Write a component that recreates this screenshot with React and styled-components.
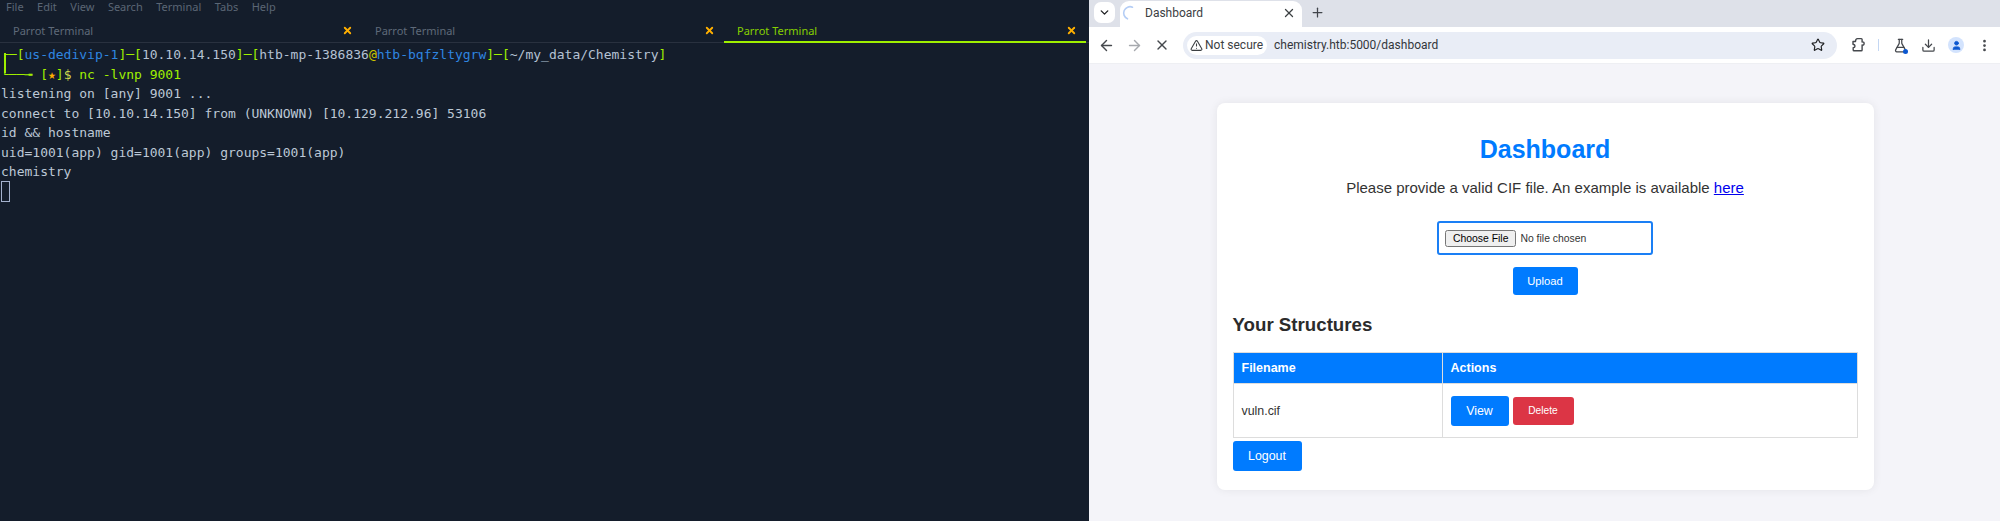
import React from 'react';
import styled, { createGlobalStyle } from 'styled-components';
import { ArrowLeft, ArrowRight, ChevronDown, Download, EllipsisVertical, FlaskConical, Plus, Star, TriangleAlert, User, X } from 'lucide-react';

const Global = createGlobalStyle`
  html, body { margin: 0; padding: 0; height: 521px; overflow: hidden; }
  * { box-sizing: border-box; }
`;

const Page = styled.div`
  display: flex;
  width: 2000px;
  height: 521px;
`;

/* Terminal */
const Terminal = styled.div`
  width: 1089px;
  flex: none;
  background: #141d2b;
  display: flex;
  flex-direction: column;
`;
const MenuBar = styled.div`
  height: 13px;
  display: flex;
  align-items: center;
  padding-left: 6px;
  gap: 13.5px;
  font: 11px "Noto Sans", sans-serif;
  color: #5b6675;
`;
const TabRow = styled.div`
  height: 30px;
  display: flex;
  padding-right: 3px;
  border-bottom: 1px solid #29313f;
`;
const TermTab = styled.div`
  flex: 1;
  display: flex;
  align-items: center;
  justify-content: space-between;
  padding: 6px 9px 0 13px;
  height: 30px;
  font: 11px "Noto Sans", sans-serif;
  color: ${p => (p.$active ? '#86d000' : '#5f6a79')};
  border-bottom: 2px solid ${p => (p.$active ? '#9fef00' : 'transparent')};
`;
const Screen = styled.div`
  position: relative;
  padding: 2px 0 0 1px;
  font: 13px/19.5px "DejaVu Sans Mono", monospace;
  color: #bcc8d6;
  white-space: pre;
`;
const PromptJoin = styled.span`
  position: absolute;
  left: 4px;
  top: 10px;
  width: 2px;
  height: 20px;
  background: #9fef00;
`;
const Line = styled.div`
  height: 19.5px;
`;
const Tone = styled.span`
  color: ${p => p.$c};
`;
const Cursor = styled.span`
  display: block;
  width: 9px;
  height: 21px;
  margin-top: -1px;
  border: 1px solid #a4b1cd;
`;

/* Browser */
const Browser = styled.div`
  flex: 1;
  min-width: 0;
  display: flex;
  flex-direction: column;
  background: #f4f4f9;
  font-family: "Liberation Sans", Arial, sans-serif;
`;
const TabStrip = styled.div`
  height: 27px;
  background: #dee1e9;
  display: flex;
  align-items: flex-end;
  padding-left: 5px;
`;
const TabSearch = styled.div`
  width: 21px;
  height: 21px;
  margin: 0 5px 4px 0;
  background: #fff;
  border-radius: 7px;
  display: flex;
  align-items: center;
  justify-content: center;
  color: #1f2023;
`;
const ChromeTab = styled.div`
  width: 182px;
  height: 26px;
  background: #fff;
  border-radius: 9px 9px 0 0;
  display: flex;
  align-items: center;
  padding: 0 6px 2px 2px;
  font: 12px Roboto, sans-serif;
  color: #3c4043;
`;
const TabTitle = styled.span`
  flex: 1;
  margin-left: 7px;
`;
const NewTab = styled.div`
  margin: 0 0 4px 8px;
  height: 21px;
  display: flex;
  align-items: center;
  color: #41454b;
`;
const Toolbar = styled.div`
  height: 36px;
  background: #fff;
  display: flex;
  align-items: center;
  padding-left: 3px;
  box-shadow: 0 1px 0 #eeeff3;
  position: relative;
`;
const NavIcon = styled.div`
  width: 28px;
  display: flex;
  justify-content: center;
  align-items: center;
  color: ${p => (p.$off ? '#a6a9ae' : '#45484d')};
`;
const Omnibox = styled.div`
  width: 654px;
  height: 27px;
  margin: 0 7px;
  border-radius: 14px;
  background: #e9edf6;
  display: flex;
  align-items: center;
  padding: 0 12px 0 4px;
  font: 12px Roboto, sans-serif;
  color: #1f2023;
`;
const SecureChip = styled.div`
  height: 19px;
  width: 80px;
  border-radius: 10px;
  background: #fff;
  display: flex;
  align-items: center;
  gap: 2px;
  padding-left: 3px;
  color: #3c4043;
`;
const Url = styled.span`
  flex: 1;
  margin-left: 7px;
  color: #33363b;
`;
const Tools = styled.div`
  display: flex;
  align-items: center;
  color: #45484d;
`;
const ToolIcon = styled.div`
  width: 28px;
  display: flex;
  justify-content: center;
  align-items: center;
  position: relative;
`;
const Divider = styled.div`
  width: 1px;
  height: 12px;
  margin: 0 7px 0 6px;
  background: #c4d7f3;
`;
const Dot = styled.span`
  position: absolute;
  right: 6px;
  bottom: -1px;
  width: 5px;
  height: 5px;
  border-radius: 50%;
  background: #0b57d0;
`;
const Avatar = styled.div`
  width: 16px;
  height: 16px;
  border-radius: 50%;
  background: #d3e3fd;
  display: flex;
  align-items: center;
  justify-content: center;
  color: #0b57d0;
`;
const Content = styled.div`
  flex: 1;
  display: flex;
  justify-content: center;
  align-items: flex-start;
  padding: 40px 0 0 1px;
`;
const Card = styled.div`
  width: 657px;
  padding: 16px 16px 19px;
  background: #fff;
  border-radius: 8px;
  box-shadow: 0 0 10px rgba(0, 0, 0, 0.07);
  display: flex;
  flex-direction: column;
  color: #333;
`;
const Title = styled.h1`
  margin: 15px 0 15px;
  font-size: 25px;
  line-height: 30px;
  font-weight: 700;
  text-align: center;
  color: #007bff;
`;
const Lead = styled.p`
  margin: 0 0 24px;
  font-size: 15px;
  line-height: 18px;
  text-align: center;
  color: #333;
`;
const Link = styled.a`
  color: #0000ee;
  text-decoration: underline;
`;
const FileInput = styled.input`
  align-self: center;
  width: 216px;
  height: 34px;
  padding: 7px 6px;
  border: 2px solid #1a7ff5;
  border-radius: 3px;
  font: 10.4px "Liberation Sans", sans-serif;
  color: #333;
  background: #fff;
`;
const Button = styled.button`
  width: ${p => p.$w}px;
  height: ${p => p.$h}px;
  padding: 0;
  border: none;
  border-radius: 3px;
  background: ${p => p.$bg || '#007bff'};
  color: #fff;
  font: ${p => p.$fs || 12.4}px "Liberation Sans", sans-serif;
`;
const UploadButton = styled(Button)`
  align-self: center;
  margin-top: 12px;
`;
const Subtitle = styled.h2`
  margin: 18px 0 15px;
  font-size: 18.7px;
  line-height: 24px;
  font-weight: 700;
  color: #2b2b2b;
`;
const Table = styled.table`
  width: 100%;
  border-collapse: collapse;
  table-layout: fixed;
`;
const Th = styled.th`
  height: 31px;
  padding: 0 8px;
  background: #007bff;
  border: 1px solid #ddd;
  color: #fff;
  font-size: 12.5px;
  font-weight: 700;
  text-align: left;
  width: ${p => p.$w || 'auto'};
`;
const Td = styled.td`
  height: 54px;
  padding: 0 8px;
  border: 1px solid #ddd;
  font-size: 12.4px;
  color: #333;
`;
const Actions = styled.div`
  display: flex;
  align-items: center;
  gap: 4px;
`;
const LogoutButton = styled(Button)`
  align-self: flex-start;
  margin-top: 3px;
`;

const PuzzleIcon = () => (
  <svg width="16" height="16" viewBox="0 0 16 16" fill="none" stroke="currentColor" strokeWidth="1.4">
    <path d="M3 4.5h2.5C5.5 2 6.5 1.6 7.5 1.6h3.8c.5 0 .8.3.8.8V5c1.6-.4 2 .6 2 1.5s-.4 1.9-2 1.5v5c0 .5-.3.8-.8.8H4c-.5 0-.8-.3-.8-.8v-2.2C4.4 10.6 5 9.8 5 9s-.6-1.6-2-1.8z" strokeLinejoin="round" />
  </svg>
);

const Spinner = () => (
  <svg width="16" height="16" viewBox="0 0 16 16" fill="none">
    <path d="M10.5 2.2A6.3 6.3 0 0 0 5.5 13.8" stroke="#b4cdf5" strokeWidth="1.6" strokeLinecap="round" />
  </svg>
);

const TabCloseIcon = () => <X size={11} strokeWidth={4} color="#ffaf00" />;

export default function App() {
  const g = '#9fef00';
  const b = '#2f86e0';
  const w = '#b4c2d4';
  return (
    <Page>
      <Global />
      <Terminal>
        <MenuBar>
          {['File', 'Edit', 'View', 'Search', 'Terminal', 'Tabs', 'Help'].map(m => <span key={m}>{m}</span>)}
        </MenuBar>
        <TabRow>
          <TermTab>Parrot Terminal<TabCloseIcon /></TermTab>
          <TermTab>Parrot Terminal<TabCloseIcon /></TermTab>
          <TermTab $active>Parrot Terminal<TabCloseIcon /></TermTab>
        </TabRow>
        <Screen>
          <PromptJoin />
          <Line>
            <Tone $c={g}>┌─[</Tone><Tone $c={b}>us-dedivip-1</Tone><Tone $c={g}>]─[</Tone><Tone $c={w}>10.10.14.150</Tone><Tone $c={g}>]─[</Tone><Tone $c={w}>htb-mp-1386836</Tone><Tone $c="#c9c400">@</Tone><Tone $c={b}>htb-bqfzltygrw</Tone><Tone $c={g}>]─[</Tone><Tone $c={w}>~/my_data/Chemistry</Tone><Tone $c={g}>]</Tone>
          </Line>
          <Line>
            <Tone $c={g}>└──╼ [</Tone><Tone $c="#ffaf00">★</Tone><Tone $c={g}>]</Tone><Tone $c="#cfd94f">$ </Tone><Tone $c={g}>nc -lvnp 9001</Tone>
          </Line>
          <Line>listening on [any] 9001 ...</Line>
          <Line>connect to [10.10.14.150] from (UNKNOWN) [10.129.212.96] 53106</Line>
          <Line>id &amp;&amp; hostname</Line>
          <Line>uid=1001(app) gid=1001(app) groups=1001(app)</Line>
          <Line>chemistry</Line>
          <Cursor />
        </Screen>
      </Terminal>
      <Browser>
        <TabStrip>
          <TabSearch><ChevronDown size={13} strokeWidth={2.5} /></TabSearch>
          <ChromeTab>
            <Spinner />
            <TabTitle>Dashboard</TabTitle>
            <X size={14} strokeWidth={2.2} />
          </ChromeTab>
          <NewTab><Plus size={15} /></NewTab>
        </TabStrip>
        <Toolbar>
          <NavIcon><ArrowLeft size={17} /></NavIcon>
          <NavIcon $off><ArrowRight size={17} /></NavIcon>
          <NavIcon><X size={16} /></NavIcon>
          <Omnibox>
            <SecureChip><TriangleAlert size={13} />Not secure</SecureChip>
            <Url>chemistry.htb:5000/dashboard</Url>
            <Star size={14} strokeWidth={2} />
          </Omnibox>
          <Tools>
            <ToolIcon><PuzzleIcon /></ToolIcon>
            <Divider />
            <ToolIcon><FlaskConical size={15} /><Dot /></ToolIcon>
            <ToolIcon><Download size={15} /></ToolIcon>
            <ToolIcon><Avatar><User size={11} fill="currentColor" /></Avatar></ToolIcon>
            <ToolIcon><EllipsisVertical size={15} strokeWidth={2.4} /></ToolIcon>
          </Tools>
        </Toolbar>
        <Content>
          <Card>
            <Title>Dashboard</Title>
            <Lead>Please provide a valid CIF file. An example is available <Link href="#">here</Link></Lead>
            <FileInput type="file" />
            <UploadButton $w={65} $h={28} $fs={11.2}>Upload</UploadButton>
            <Subtitle>Your Structures</Subtitle>
            <Table>
              <thead>
                <tr><Th $w="209px">Filename</Th><Th>Actions</Th></tr>
              </thead>
              <tbody>
                <tr>
                  <Td>vuln.cif</Td>
                  <Td>
                    <Actions>
                      <Button $w={58} $h={30}>View</Button>
                      <Button $w={61} $h={28} $bg="#dc3545" $fs={10.2}>Delete</Button>
                    </Actions>
                  </Td>
                </tr>
              </tbody>
            </Table>
            <LogoutButton $w={69} $h={30}>Logout</LogoutButton>
          </Card>
        </Content>
      </Browser>
    </Page>
  );
}
